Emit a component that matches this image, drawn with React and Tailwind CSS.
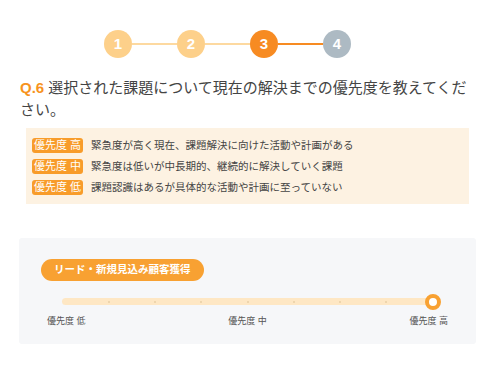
import React from "react";

const font = { fontFamily: '"Liberation Sans", "Noto Sans CJK JP", sans-serif' };

const steps = [
    { n: 1, cls: "bg-[#fdd08a]" },
    { n: 2, cls: "bg-[#fdd08a]" },
    { n: 3, cls: "bg-[#f78b22]" },
    { n: 4, cls: "bg-[#adbac3]" },
];

const lines = ["bg-[#fdd9a0]", "bg-[#fdd9a0]", "bg-[#f78b22]"];

const levels = [
    { label: "優先度 高", text: "緊急度が高く現在、課題解決に向けた活動や計画がある" },
    { label: "優先度 中", text: "緊急度は低いが中長期的、継続的に解決していく課題" },
    { label: "優先度 低", text: "課題認識はあるが具体的な活動や計画に至っていない" },
];

export default function App() {
    return (
        <div className="w-[498px] h-[372px] bg-white overflow-hidden" style={font}>
            {/* Stepper */}
            <div className="flex items-center pt-[30px] pl-[104px]">
                {steps.map((s, i) => (
                    <React.Fragment key={s.n}>
                        <div
                            className={`w-[28px] h-[28px] rounded-full ${s.cls} text-white font-bold text-[15px] flex items-center justify-center`}
                        >
                            {s.n}
                        </div>
                        {i < lines.length && <div className={`w-[45px] h-[2px] ${lines[i]}`} />}
                    </React.Fragment>
                ))}
            </div>

            {/* Question */}
            <p className="mt-[19px] pl-[20px] pr-[28px] text-[15px] leading-[22px] text-[#444]">
                <span className="inline-block text-[#f7931e] font-bold mr-[4px]">Q.6</span>
                選択された課題について現在の解決までの優先度を教えてください。
            </p>

            {/* Legend */}
            <div className="mt-[7px] ml-[26px] w-[443px] h-[76px] bg-[#fdf2e2] pt-[10px] px-[6px] flex flex-col gap-[6px]">
                {levels.map((l) => (
                    <div key={l.label} className="flex items-center gap-[8px] h-[15px]">
                        <span className="bg-[#f89c2a] text-white text-[11px] leading-[15px] px-[2px] rounded-[3px] whitespace-nowrap">
                            {l.label}
                        </span>
                        <span className="text-[10.5px] leading-[15px] text-[#444] whitespace-nowrap">{l.text}</span>
                    </div>
                ))}
            </div>

            {/* Slider panel */}
            <div className="mt-[34px] ml-[19px] w-[457px] h-[106px] bg-[#f6f7f9] rounded-[3px] pt-[18px] px-[22px]">
                <div className="inline-flex items-center h-[22px] px-[13px] rounded-full bg-[#f8a132] text-white text-[10.5px] font-bold">
                    リード・新規見込み顧客獲得
                </div>
                <div className="relative mt-[13px] ml-[21px] w-[371px] h-[16px] flex items-center">
                    <div className="w-full h-[7px] rounded-full bg-[#fee7c4] flex items-center justify-between">
                        {Array.from({ length: 9 }).map((_, i) => (
                            <span
                                key={i}
                                className={`w-[2px] h-[2px] rounded-full ${i === 0 || i === 8 ? "bg-transparent" : "bg-[#e8cfa6]"}`}
                            />
                        ))}
                    </div>
                    <div className="absolute right-[-8px] top-0 w-[16px] h-[16px] rounded-full bg-white border-[4px] border-[#f8a132]" />
                </div>
                <div className="flex justify-between mt-[5px] ml-[6px] mr-[6px] text-[9px] text-[#555]">
                    <span>優先度 低</span>
                    <span>優先度 中</span>
                    <span>優先度 高</span>
                </div>
            </div>
        </div>
    );
}
